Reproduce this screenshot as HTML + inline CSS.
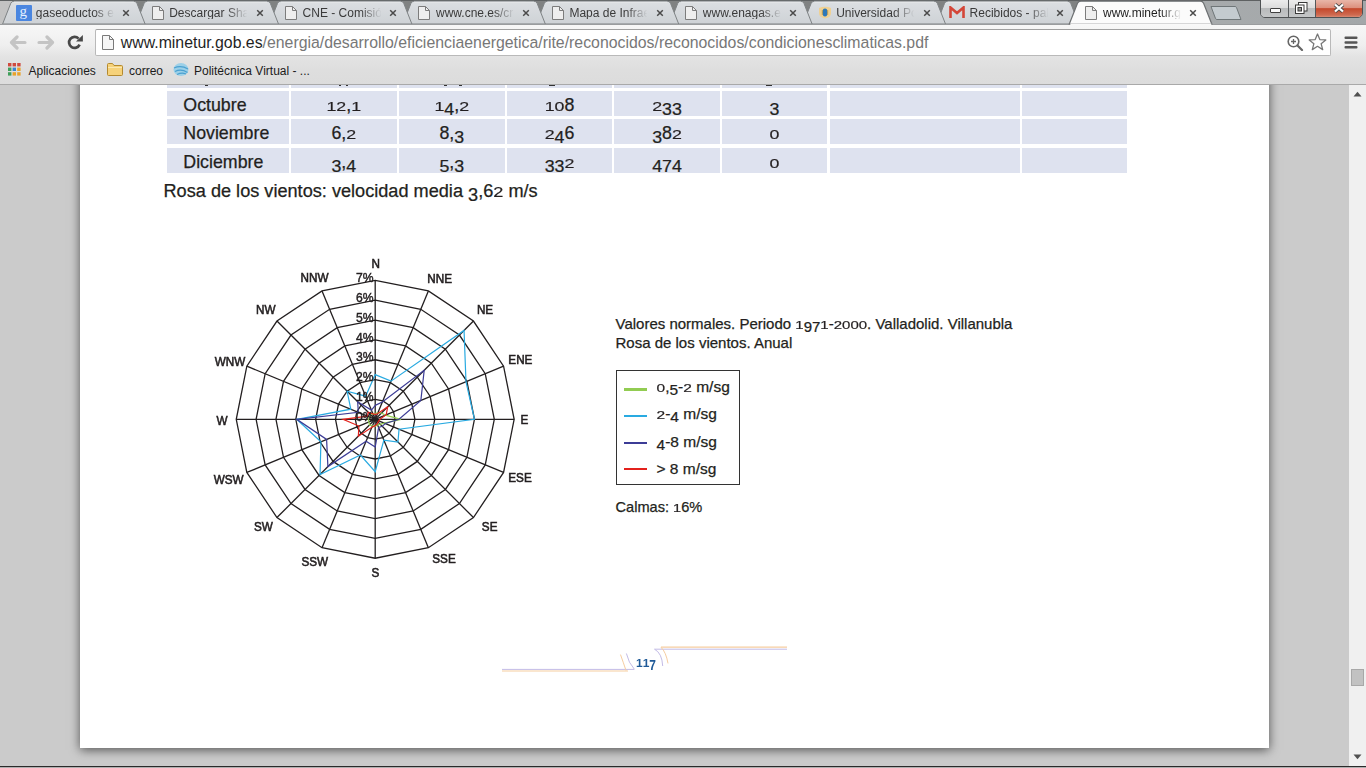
<!DOCTYPE html>
<html><head><meta charset="utf-8"><style>
*{box-sizing:border-box}
html,body{margin:0;padding:0}
body{width:1366px;height:768px;overflow:hidden;position:relative;background:#cbcbcb;font-family:"Liberation Sans",sans-serif;color:#222}
.abs{position:absolute}
.tt{position:absolute;white-space:pre;line-height:1}
</style></head><body>

<div class="abs" style="left:80px;top:60px;width:1189px;height:688px;background:#fff;box-shadow:0 2px 10px rgba(0,0,0,0.6)"></div>
<div class="abs" style="left:167px;top:60px;width:122px;height:28px;background:#dee2ef"></div>
<div class="abs" style="left:291px;top:60px;width:105.5px;height:28px;background:#dee2ef"></div>
<div class="abs" style="left:399px;top:60px;width:105.5px;height:28px;background:#dee2ef"></div>
<div class="abs" style="left:507px;top:60px;width:105px;height:28px;background:#dee2ef"></div>
<div class="abs" style="left:614px;top:60px;width:106px;height:28px;background:#dee2ef"></div>
<div class="abs" style="left:722px;top:60px;width:105px;height:28px;background:#dee2ef"></div>
<div class="abs" style="left:830px;top:60px;width:189.5px;height:28px;background:#dee2ef"></div>
<div class="abs" style="left:1022px;top:60px;width:105px;height:28px;background:#dee2ef"></div>
<div class="abs" style="left:167px;top:91px;width:122px;height:25px;background:#dee2ef"></div>
<div class="abs" style="left:291px;top:91px;width:105.5px;height:25px;background:#dee2ef"></div>
<div class="abs" style="left:399px;top:91px;width:105.5px;height:25px;background:#dee2ef"></div>
<div class="abs" style="left:507px;top:91px;width:105px;height:25px;background:#dee2ef"></div>
<div class="abs" style="left:614px;top:91px;width:106px;height:25px;background:#dee2ef"></div>
<div class="abs" style="left:722px;top:91px;width:105px;height:25px;background:#dee2ef"></div>
<div class="abs" style="left:830px;top:91px;width:189.5px;height:25px;background:#dee2ef"></div>
<div class="abs" style="left:1022px;top:91px;width:105px;height:25px;background:#dee2ef"></div>
<div class="abs" style="left:167px;top:119px;width:122px;height:25px;background:#dee2ef"></div>
<div class="abs" style="left:291px;top:119px;width:105.5px;height:25px;background:#dee2ef"></div>
<div class="abs" style="left:399px;top:119px;width:105.5px;height:25px;background:#dee2ef"></div>
<div class="abs" style="left:507px;top:119px;width:105px;height:25px;background:#dee2ef"></div>
<div class="abs" style="left:614px;top:119px;width:106px;height:25px;background:#dee2ef"></div>
<div class="abs" style="left:722px;top:119px;width:105px;height:25px;background:#dee2ef"></div>
<div class="abs" style="left:830px;top:119px;width:189.5px;height:25px;background:#dee2ef"></div>
<div class="abs" style="left:1022px;top:119px;width:105px;height:25px;background:#dee2ef"></div>
<div class="abs" style="left:167px;top:147.5px;width:122px;height:25.0px;background:#dee2ef"></div>
<div class="abs" style="left:291px;top:147.5px;width:105.5px;height:25.0px;background:#dee2ef"></div>
<div class="abs" style="left:399px;top:147.5px;width:105.5px;height:25.0px;background:#dee2ef"></div>
<div class="abs" style="left:507px;top:147.5px;width:105px;height:25.0px;background:#dee2ef"></div>
<div class="abs" style="left:614px;top:147.5px;width:106px;height:25.0px;background:#dee2ef"></div>
<div class="abs" style="left:722px;top:147.5px;width:105px;height:25.0px;background:#dee2ef"></div>
<div class="abs" style="left:830px;top:147.5px;width:189.5px;height:25.0px;background:#dee2ef"></div>
<div class="abs" style="left:1022px;top:147.5px;width:105px;height:25.0px;background:#dee2ef"></div>
<div class="tt" style="left:183.3px;top:97.1px;font-size:17.8px;color:#231f20;-webkit-text-stroke:0.25px #231f20;">Octubre</div>
<div class="tt" style="left:291px;top:97.1px;width:105.5px;text-align:center;font-size:17.8px;color:#231f20;-webkit-text-stroke:0.25px #231f20;"><span style="display:inline-block;transform:scaleY(0.76);transform-origin:50% 84.65%">1</span><span style="display:inline-block;transform:scaleY(0.76);transform-origin:50% 84.65%">2</span>,<span style="display:inline-block;transform:scaleY(0.76);transform-origin:50% 84.65%">1</span></div>
<div class="tt" style="left:399px;top:97.1px;width:105.5px;text-align:center;font-size:17.8px;color:#231f20;-webkit-text-stroke:0.25px #231f20;"><span style="display:inline-block;transform:scaleY(0.76);transform-origin:50% 84.65%">1</span><span style="display:inline-block;transform:translateY(0.2em) scaleY(0.96);transform-origin:50% 84.65%">4</span>,<span style="display:inline-block;transform:scaleY(0.76);transform-origin:50% 84.65%">2</span></div>
<div class="tt" style="left:507px;top:97.1px;width:105px;text-align:center;font-size:17.8px;color:#231f20;-webkit-text-stroke:0.25px #231f20;"><span style="display:inline-block;transform:scaleY(0.76);transform-origin:50% 84.65%">1</span><span style="display:inline-block;transform:scaleY(0.76);transform-origin:50% 84.65%">0</span>8</div>
<div class="tt" style="left:614px;top:97.1px;width:106px;text-align:center;font-size:17.8px;color:#231f20;-webkit-text-stroke:0.25px #231f20;"><span style="display:inline-block;transform:scaleY(0.76);transform-origin:50% 84.65%">2</span><span style="display:inline-block;transform:translateY(0.2em) scaleY(0.96);transform-origin:50% 84.65%">3</span><span style="display:inline-block;transform:translateY(0.2em) scaleY(0.96);transform-origin:50% 84.65%">3</span></div>
<div class="tt" style="left:722px;top:97.1px;width:105px;text-align:center;font-size:17.8px;color:#231f20;-webkit-text-stroke:0.25px #231f20;"><span style="display:inline-block;transform:translateY(0.2em) scaleY(0.96);transform-origin:50% 84.65%">3</span></div>
<div class="tt" style="left:183.3px;top:125.1px;font-size:17.8px;color:#231f20;-webkit-text-stroke:0.25px #231f20;">Noviembre</div>
<div class="tt" style="left:291px;top:125.1px;width:105.5px;text-align:center;font-size:17.8px;color:#231f20;-webkit-text-stroke:0.25px #231f20;">6,<span style="display:inline-block;transform:scaleY(0.76);transform-origin:50% 84.65%">2</span></div>
<div class="tt" style="left:399px;top:125.1px;width:105.5px;text-align:center;font-size:17.8px;color:#231f20;-webkit-text-stroke:0.25px #231f20;">8,<span style="display:inline-block;transform:translateY(0.2em) scaleY(0.96);transform-origin:50% 84.65%">3</span></div>
<div class="tt" style="left:507px;top:125.1px;width:105px;text-align:center;font-size:17.8px;color:#231f20;-webkit-text-stroke:0.25px #231f20;"><span style="display:inline-block;transform:scaleY(0.76);transform-origin:50% 84.65%">2</span><span style="display:inline-block;transform:translateY(0.2em) scaleY(0.96);transform-origin:50% 84.65%">4</span>6</div>
<div class="tt" style="left:614px;top:125.1px;width:106px;text-align:center;font-size:17.8px;color:#231f20;-webkit-text-stroke:0.25px #231f20;"><span style="display:inline-block;transform:translateY(0.2em) scaleY(0.96);transform-origin:50% 84.65%">3</span>8<span style="display:inline-block;transform:scaleY(0.76);transform-origin:50% 84.65%">2</span></div>
<div class="tt" style="left:722px;top:125.1px;width:105px;text-align:center;font-size:17.8px;color:#231f20;-webkit-text-stroke:0.25px #231f20;"><span style="display:inline-block;transform:scaleY(0.76);transform-origin:50% 84.65%">0</span></div>
<div class="tt" style="left:183.3px;top:153.6px;font-size:17.8px;color:#231f20;-webkit-text-stroke:0.25px #231f20;">Diciembre</div>
<div class="tt" style="left:291px;top:153.6px;width:105.5px;text-align:center;font-size:17.8px;color:#231f20;-webkit-text-stroke:0.25px #231f20;"><span style="display:inline-block;transform:translateY(0.2em) scaleY(0.96);transform-origin:50% 84.65%">3</span>,<span style="display:inline-block;transform:translateY(0.2em) scaleY(0.96);transform-origin:50% 84.65%">4</span></div>
<div class="tt" style="left:399px;top:153.6px;width:105.5px;text-align:center;font-size:17.8px;color:#231f20;-webkit-text-stroke:0.25px #231f20;"><span style="display:inline-block;transform:translateY(0.2em) scaleY(0.96);transform-origin:50% 84.65%">5</span>,<span style="display:inline-block;transform:translateY(0.2em) scaleY(0.96);transform-origin:50% 84.65%">3</span></div>
<div class="tt" style="left:507px;top:153.6px;width:105px;text-align:center;font-size:17.8px;color:#231f20;-webkit-text-stroke:0.25px #231f20;"><span style="display:inline-block;transform:translateY(0.2em) scaleY(0.96);transform-origin:50% 84.65%">3</span><span style="display:inline-block;transform:translateY(0.2em) scaleY(0.96);transform-origin:50% 84.65%">3</span><span style="display:inline-block;transform:scaleY(0.76);transform-origin:50% 84.65%">2</span></div>
<div class="tt" style="left:614px;top:153.6px;width:106px;text-align:center;font-size:17.8px;color:#231f20;-webkit-text-stroke:0.25px #231f20;"><span style="display:inline-block;transform:translateY(0.2em) scaleY(0.96);transform-origin:50% 84.65%">4</span><span style="display:inline-block;transform:translateY(0.2em) scaleY(0.96);transform-origin:50% 84.65%">7</span><span style="display:inline-block;transform:translateY(0.2em) scaleY(0.96);transform-origin:50% 84.65%">4</span></div>
<div class="tt" style="left:722px;top:153.6px;width:105px;text-align:center;font-size:17.8px;color:#231f20;-webkit-text-stroke:0.25px #231f20;"><span style="display:inline-block;transform:scaleY(0.76);transform-origin:50% 84.65%">0</span></div>
<div class="abs" style="left:205px;top:85px;width:2.5px;height:1.2px;background:#333"></div>
<div class="abs" style="left:338.5px;top:85px;width:2.0px;height:1.2px;background:#333"></div>
<div class="abs" style="left:346px;top:85px;width:2px;height:1.2px;background:#333"></div>
<div class="abs" style="left:444px;top:85px;width:2.5px;height:1.2px;background:#333"></div>
<div class="abs" style="left:459px;top:85px;width:2.5px;height:1.2px;background:#333"></div>
<div class="abs" style="left:549px;top:85px;width:6px;height:1.2px;background:#333"></div>
<div class="abs" style="left:766px;top:85px;width:6px;height:1.2px;background:#333"></div>
<div class="tt" style="left:163.5px;top:182.4px;font-size:18.15px;color:#231f20;-webkit-text-stroke:0.25px #231f20;">Rosa de los vientos: velocidad media <span style="display:inline-block;transform:translateY(0.2em) scaleY(0.96);transform-origin:50% 84.65%">3</span>,6<span style="display:inline-block;transform:scaleY(0.76);transform-origin:50% 84.65%">2</span> m/s</div>
<svg class="abs" style="left:0;top:0" width="1366" height="768" viewBox="0 0 1366 768">
<polygon points="375.20,399.45 382.80,400.96 389.24,405.26 393.54,411.70 395.05,419.30 393.54,426.90 389.24,433.34 382.80,437.64 375.20,439.15 367.60,437.64 361.16,433.34 356.86,426.90 355.35,419.30 356.86,411.70 361.16,405.26 367.60,400.96" fill="none" stroke="#231f20" stroke-width="1.3"/>
<polygon points="375.20,379.60 390.39,382.62 403.27,391.23 411.88,404.11 414.90,419.30 411.88,434.49 403.27,447.37 390.39,455.98 375.20,459.00 360.01,455.98 347.13,447.37 338.52,434.49 335.50,419.30 338.52,404.11 347.13,391.23 360.01,382.62" fill="none" stroke="#231f20" stroke-width="1.3"/>
<polygon points="375.20,359.75 397.99,364.28 417.31,377.19 430.22,396.51 434.75,419.30 430.22,442.09 417.31,461.41 397.99,474.32 375.20,478.85 352.41,474.32 333.09,461.41 320.18,442.09 315.65,419.30 320.18,396.51 333.09,377.19 352.41,364.28" fill="none" stroke="#231f20" stroke-width="1.3"/>
<polygon points="375.20,339.90 405.59,345.94 431.34,363.16 448.56,388.91 454.60,419.30 448.56,449.69 431.34,475.44 405.59,492.66 375.20,498.70 344.81,492.66 319.06,475.44 301.84,449.69 295.80,419.30 301.84,388.91 319.06,363.16 344.81,345.94" fill="none" stroke="#231f20" stroke-width="1.3"/>
<polygon points="375.20,320.05 413.18,327.60 445.38,349.12 466.90,381.32 474.45,419.30 466.90,457.28 445.38,489.48 413.18,511.00 375.20,518.55 337.22,511.00 305.02,489.48 283.50,457.28 275.95,419.30 283.50,381.32 305.02,349.12 337.22,327.60" fill="none" stroke="#231f20" stroke-width="1.3"/>
<polygon points="375.20,300.20 420.78,309.27 459.42,335.08 485.23,373.72 494.30,419.30 485.23,464.88 459.42,503.52 420.78,529.33 375.20,538.40 329.62,529.33 290.98,503.52 265.17,464.88 256.10,419.30 265.17,373.72 290.98,335.08 329.62,309.27" fill="none" stroke="#231f20" stroke-width="1.3"/>
<polygon points="375.20,280.35 428.37,290.93 473.45,321.05 503.57,366.13 514.15,419.30 503.57,472.47 473.45,517.55 428.37,547.67 375.20,558.25 322.03,547.67 276.95,517.55 246.83,472.47 236.25,419.30 246.83,366.13 276.95,321.05 322.03,290.93" fill="none" stroke="#231f20" stroke-width="1.3"/>
<line x1="375.2" y1="419.3" x2="375.20" y2="280.35" stroke="#231f20" stroke-width="1.3"/>
<line x1="375.2" y1="419.3" x2="428.37" y2="290.93" stroke="#231f20" stroke-width="1.3"/>
<line x1="375.2" y1="419.3" x2="473.45" y2="321.05" stroke="#231f20" stroke-width="1.3"/>
<line x1="375.2" y1="419.3" x2="503.57" y2="366.13" stroke="#231f20" stroke-width="1.3"/>
<line x1="375.2" y1="419.3" x2="514.15" y2="419.30" stroke="#231f20" stroke-width="1.3"/>
<line x1="375.2" y1="419.3" x2="503.57" y2="472.47" stroke="#231f20" stroke-width="1.3"/>
<line x1="375.2" y1="419.3" x2="473.45" y2="517.55" stroke="#231f20" stroke-width="1.3"/>
<line x1="375.2" y1="419.3" x2="428.37" y2="547.67" stroke="#231f20" stroke-width="1.3"/>
<line x1="375.2" y1="419.3" x2="375.20" y2="558.25" stroke="#231f20" stroke-width="1.3"/>
<line x1="375.2" y1="419.3" x2="322.03" y2="547.67" stroke="#231f20" stroke-width="1.3"/>
<line x1="375.2" y1="419.3" x2="276.95" y2="517.55" stroke="#231f20" stroke-width="1.3"/>
<line x1="375.2" y1="419.3" x2="246.83" y2="472.47" stroke="#231f20" stroke-width="1.3"/>
<line x1="375.2" y1="419.3" x2="236.25" y2="419.30" stroke="#231f20" stroke-width="1.3"/>
<line x1="375.2" y1="419.3" x2="246.83" y2="366.13" stroke="#231f20" stroke-width="1.3"/>
<line x1="375.2" y1="419.3" x2="276.95" y2="321.05" stroke="#231f20" stroke-width="1.3"/>
<line x1="375.2" y1="419.3" x2="322.03" y2="290.93" stroke="#231f20" stroke-width="1.3"/>
<polygon points="375.20,413.35 377.86,412.88 381.52,412.98 385.29,415.12 401.00,419.30 384.37,423.10 380.11,424.21 377.48,424.80 375.20,426.25 372.54,425.72 369.59,424.91 368.78,421.96 368.25,419.30 369.70,417.02 370.99,415.09 372.92,413.80" fill="none" stroke="#92cc52" stroke-width="1.2" stroke-linejoin="miter"/>
<polygon points="375.20,374.64 391.00,381.15 464.05,330.45 465.98,381.70 474.45,419.30 399.04,429.18 397.94,442.04 383.86,440.21 375.20,471.70 360.39,455.06 320.04,474.46 320.92,441.78 296.79,419.30 350.81,409.20 347.13,391.23 365.63,396.19" fill="none" stroke="#29aae1" stroke-width="1.2" stroke-linejoin="miter"/>
<polygon points="375.20,405.41 382.34,402.06 424.19,370.31 420.86,400.39 399.02,419.30 385.29,423.48 382.22,426.32 378.62,427.55 375.20,447.09 366.08,441.31 327.90,466.60 326.60,439.43 296.79,419.30 358.33,412.31 357.65,401.75 371.40,410.13" fill="none" stroke="#3c3c96" stroke-width="1.2" stroke-linejoin="miter"/>
<polygon points="375.20,414.34 377.48,413.80 387.69,406.81 386.20,414.74 379.96,419.30 378.87,420.82 378.01,422.11 377.10,423.88 375.20,425.65 371.93,427.19 358.36,436.14 358.88,426.06 343.04,419.30 367.50,416.11 368.18,412.28 372.92,413.80" fill="none" stroke="#e3211c" stroke-width="1.2" stroke-linejoin="miter"/>
</svg>
<div class="tt" style="left:335.7px;top:256.6px;width:80px;text-align:center;font-size:13px;color:#231f20;-webkit-text-stroke:0.6px #231f20"><span style="display:inline-block;transform:scaleX(0.9)">N</span></div>
<div class="tt" style="left:399.7px;top:271.9px;width:80px;text-align:center;font-size:13px;color:#231f20;-webkit-text-stroke:0.6px #231f20"><span style="display:inline-block;transform:scaleX(0.9)">NNE</span></div>
<div class="tt" style="left:445.4px;top:302.9px;width:80px;text-align:center;font-size:13px;color:#231f20;-webkit-text-stroke:0.6px #231f20"><span style="display:inline-block;transform:scaleX(0.9)">NE</span></div>
<div class="tt" style="left:480.0px;top:352.9px;width:80px;text-align:center;font-size:13px;color:#231f20;-webkit-text-stroke:0.6px #231f20"><span style="display:inline-block;transform:scaleX(0.9)">ENE</span></div>
<div class="tt" style="left:484.6px;top:412.6px;width:80px;text-align:center;font-size:13px;color:#231f20;-webkit-text-stroke:0.6px #231f20"><span style="display:inline-block;transform:scaleX(0.9)">E</span></div>
<div class="tt" style="left:480.2px;top:470.7px;width:80px;text-align:center;font-size:13px;color:#231f20;-webkit-text-stroke:0.6px #231f20"><span style="display:inline-block;transform:scaleX(0.9)">ESE</span></div>
<div class="tt" style="left:449.9px;top:519.7px;width:80px;text-align:center;font-size:13px;color:#231f20;-webkit-text-stroke:0.6px #231f20"><span style="display:inline-block;transform:scaleX(0.9)">SE</span></div>
<div class="tt" style="left:403.7px;top:551.9px;width:80px;text-align:center;font-size:13px;color:#231f20;-webkit-text-stroke:0.6px #231f20"><span style="display:inline-block;transform:scaleX(0.9)">SSE</span></div>
<div class="tt" style="left:335.2px;top:565.7px;width:80px;text-align:center;font-size:13px;color:#231f20;-webkit-text-stroke:0.6px #231f20"><span style="display:inline-block;transform:scaleX(0.9)">S</span></div>
<div class="tt" style="left:274.4px;top:554.9px;width:80px;text-align:center;font-size:13px;color:#231f20;-webkit-text-stroke:0.6px #231f20"><span style="display:inline-block;transform:scaleX(0.9)">SSW</span></div>
<div class="tt" style="left:223.4px;top:519.7px;width:80px;text-align:center;font-size:13px;color:#231f20;-webkit-text-stroke:0.6px #231f20"><span style="display:inline-block;transform:scaleX(0.9)">SW</span></div>
<div class="tt" style="left:189.1px;top:472.8px;width:80px;text-align:center;font-size:13px;color:#231f20;-webkit-text-stroke:0.6px #231f20"><span style="display:inline-block;transform:scaleX(0.9)">WSW</span></div>
<div class="tt" style="left:182.4px;top:413.6px;width:80px;text-align:center;font-size:13px;color:#231f20;-webkit-text-stroke:0.6px #231f20"><span style="display:inline-block;transform:scaleX(0.9)">W</span></div>
<div class="tt" style="left:189.7px;top:355.0px;width:80px;text-align:center;font-size:13px;color:#231f20;-webkit-text-stroke:0.6px #231f20"><span style="display:inline-block;transform:scaleX(0.9)">WNW</span></div>
<div class="tt" style="left:226.3px;top:302.9px;width:80px;text-align:center;font-size:13px;color:#231f20;-webkit-text-stroke:0.6px #231f20"><span style="display:inline-block;transform:scaleX(0.9)">NW</span></div>
<div class="tt" style="left:274.9px;top:270.9px;width:80px;text-align:center;font-size:13px;color:#231f20;-webkit-text-stroke:0.6px #231f20"><span style="display:inline-block;transform:scaleX(0.9)">NNW</span></div>
<div class="tt" style="left:313.3px;top:409.9px;width:60px;text-align:right;font-size:13.5px;color:#231f20;-webkit-text-stroke:0.45px #231f20"><span style="display:inline-block;transform:scaleX(0.9);transform-origin:100% 50%">0%</span></div>
<div class="tt" style="left:313.3px;top:390.0px;width:60px;text-align:right;font-size:13.5px;color:#231f20;-webkit-text-stroke:0.45px #231f20"><span style="display:inline-block;transform:scaleX(0.9);transform-origin:100% 50%">1%</span></div>
<div class="tt" style="left:313.3px;top:370.2px;width:60px;text-align:right;font-size:13.5px;color:#231f20;-webkit-text-stroke:0.45px #231f20"><span style="display:inline-block;transform:scaleX(0.9);transform-origin:100% 50%">2%</span></div>
<div class="tt" style="left:313.3px;top:350.3px;width:60px;text-align:right;font-size:13.5px;color:#231f20;-webkit-text-stroke:0.45px #231f20"><span style="display:inline-block;transform:scaleX(0.9);transform-origin:100% 50%">3%</span></div>
<div class="tt" style="left:313.3px;top:330.5px;width:60px;text-align:right;font-size:13.5px;color:#231f20;-webkit-text-stroke:0.45px #231f20"><span style="display:inline-block;transform:scaleX(0.9);transform-origin:100% 50%">4%</span></div>
<div class="tt" style="left:313.3px;top:310.6px;width:60px;text-align:right;font-size:13.5px;color:#231f20;-webkit-text-stroke:0.45px #231f20"><span style="display:inline-block;transform:scaleX(0.9);transform-origin:100% 50%">5%</span></div>
<div class="tt" style="left:313.3px;top:290.8px;width:60px;text-align:right;font-size:13.5px;color:#231f20;-webkit-text-stroke:0.45px #231f20"><span style="display:inline-block;transform:scaleX(0.9);transform-origin:100% 50%">6%</span></div>
<div class="tt" style="left:313.3px;top:270.9px;width:60px;text-align:right;font-size:13.5px;color:#231f20;-webkit-text-stroke:0.45px #231f20"><span style="display:inline-block;transform:scaleX(0.9);transform-origin:100% 50%">7%</span></div>
<div class="tt" style="left:615.5px;top:315.6px;font-size:15px;color:#231f20;-webkit-text-stroke:0.25px #231f20;">Valores normales. Periodo <span style="display:inline-block;transform:scaleY(0.76);transform-origin:50% 84.65%">1</span><span style="display:inline-block;transform:translateY(0.2em) scaleY(0.96);transform-origin:50% 84.65%">9</span><span style="display:inline-block;transform:translateY(0.2em) scaleY(0.96);transform-origin:50% 84.65%">7</span><span style="display:inline-block;transform:scaleY(0.76);transform-origin:50% 84.65%">1</span>-<span style="display:inline-block;transform:scaleY(0.76);transform-origin:50% 84.65%">2</span><span style="display:inline-block;transform:scaleY(0.76);transform-origin:50% 84.65%">0</span><span style="display:inline-block;transform:scaleY(0.76);transform-origin:50% 84.65%">0</span><span style="display:inline-block;transform:scaleY(0.76);transform-origin:50% 84.65%">0</span>. Valladolid. Villanubla</div>
<div class="tt" style="left:615.5px;top:334.6px;font-size:15px;color:#231f20;-webkit-text-stroke:0.25px #231f20;">Rosa de los vientos. Anual</div>
<div class="abs" style="left:615.7px;top:369.9px;width:124.5px;height:114.7px;border:1.4px solid #333"></div>
<div class="abs" style="left:624.3px;top:388.2px;width:22.3px;height:2.4px;background:#92cc52"></div>
<div class="tt" style="left:656.5px;top:378.5px;font-size:15.5px;color:#231f20;-webkit-text-stroke:0.25px #231f20;"><span style="display:inline-block;transform:scaleY(0.76);transform-origin:50% 84.65%">0</span>,<span style="display:inline-block;transform:translateY(0.2em) scaleY(0.96);transform-origin:50% 84.65%">5</span>-<span style="display:inline-block;transform:scaleY(0.76);transform-origin:50% 84.65%">2</span> m/sg</div>
<div class="abs" style="left:624.3px;top:414.8px;width:22.3px;height:2.4px;background:#29aae1"></div>
<div class="tt" style="left:656.5px;top:405.6px;font-size:15.5px;color:#231f20;-webkit-text-stroke:0.25px #231f20;"><span style="display:inline-block;transform:scaleY(0.76);transform-origin:50% 84.65%">2</span>-<span style="display:inline-block;transform:translateY(0.2em) scaleY(0.96);transform-origin:50% 84.65%">4</span> m/sg</div>
<div class="abs" style="left:624.3px;top:441.6px;width:22.3px;height:2.4px;background:#3c3c96"></div>
<div class="tt" style="left:656.5px;top:433.8px;font-size:15.5px;color:#231f20;-webkit-text-stroke:0.25px #231f20;"><span style="display:inline-block;transform:translateY(0.2em) scaleY(0.96);transform-origin:50% 84.65%">4</span>-8 m/sg</div>
<div class="abs" style="left:624.3px;top:467.5px;width:22.3px;height:2.4px;background:#e3211c"></div>
<div class="tt" style="left:656.5px;top:461.3px;font-size:15.5px;color:#231f20;-webkit-text-stroke:0.25px #231f20;">&gt; 8 m/sg</div>
<div class="tt" style="left:615.5px;top:500.2px;font-size:14.6px;color:#231f20;-webkit-text-stroke:0.25px #231f20;">Calmas: <span style="display:inline-block;transform:scaleY(0.76);transform-origin:50% 84.65%">1</span>6%</div>
<svg class="abs" style="left:0;top:0" width="1366" height="768" viewBox="0 0 1366 768">
<line x1="502" y1="671" x2="628" y2="671" stroke="#f6cda0" stroke-width="1.05"/>
<line x1="502" y1="669.4" x2="634" y2="669.4" stroke="#c3bbe6" stroke-width="1"/>
<path d="M620.5,654.6 Q623.5,663 626,670.5" fill="none" stroke="#f6cda0" stroke-width="1"/>
<path d="M626.4,653.5 Q628.5,663 634.5,669.4" fill="none" stroke="#c3bbe6" stroke-width="1"/>
<line x1="661" y1="647.1" x2="787" y2="647.1" stroke="#f6cda0" stroke-width="1.05"/>
<line x1="654.5" y1="649.2" x2="787" y2="649.2" stroke="#c3bbe6" stroke-width="1"/>
<path d="M654.5,649.2 Q662,653 662.7,666" fill="none" stroke="#c3bbe6" stroke-width="1"/>
<path d="M661,647.3 Q666,652 668,663.4" fill="none" stroke="#f6cda0" stroke-width="1"/>
</svg>
<div class="tt" style="left:635.5px;top:654.2px;font-size:15px;font-weight:bold;color:#1f5a98;transform:scaleX(0.8);transform-origin:0 0"><span style="display:inline-block;transform:scaleY(0.76);transform-origin:50% 84.65%">1</span><span style="display:inline-block;transform:scaleY(0.76);transform-origin:50% 84.65%">1</span><span style="display:inline-block;transform:translateY(0.2em) scaleY(0.96);transform-origin:50% 84.65%">7</span></div>
<div class="abs" style="left:1349px;top:85px;width:17px;height:683px;background:#f0f0f0"></div>
<svg class="abs" style="left:1353px;top:91px" width="9" height="6" viewBox="0 0 9 6"><path d="M0.5,5.5 L4.5,0.8 L8.5,5.5 Z" fill="#505050"/></svg>
<svg class="abs" style="left:1353px;top:754px" width="9" height="6" viewBox="0 0 9 6"><path d="M0.5,0.5 L4.5,5.2 L8.5,0.5 Z" fill="#505050"/></svg>
<div class="abs" style="left:1351px;top:669px;width:13px;height:16.5px;background:#c2c2c2;border:1px solid #a8a8a8"></div>
<div class="abs" style="left:0;top:765.5px;width:1366px;height:1.5px;background:#2a2a2a"></div>
<div class="abs" style="left:0;top:767px;width:1366px;height:1px;background:#b0b0b0"></div>
<svg class="abs" style="left:0;top:0" width="1366" height="25" viewBox="0 0 1366 25">
<defs>
<linearGradient id="frame" x1="0" y1="0" x2="1" y2="0">
<stop offset="0" stop-color="#c3c3c3"/><stop offset="0.5" stop-color="#b4b6b7"/><stop offset="1" stop-color="#a3a7a9"/></linearGradient>
<linearGradient id="tabg" x1="0" y1="0" x2="0" y2="1">
<stop offset="0" stop-color="#dcdfe2"/><stop offset="1" stop-color="#ced2d6"/></linearGradient>
<linearGradient id="fadeg" x1="0" y1="0" x2="1" y2="0">
<stop offset="0" stop-color="#d4d7db" stop-opacity="0"/><stop offset="1" stop-color="#d4d7db" stop-opacity="1"/></linearGradient>
<linearGradient id="fadea" x1="0" y1="0" x2="1" y2="0">
<stop offset="0" stop-color="#fbfbfb" stop-opacity="0"/><stop offset="1" stop-color="#fbfbfb" stop-opacity="1"/></linearGradient>
</defs>
<rect x="0" y="0" width="1366" height="25" fill="url(#frame)"/>
<path d="M125.0,0.5 L147.0,0.5 L136.0,24 Z" fill="#808282"/>
<path d="M258.4,0.5 L280.4,0.5 L269.4,24 Z" fill="#808282"/>
<path d="M391.8,0.5 L413.8,0.5 L402.8,24 Z" fill="#808282"/>
<path d="M525.2,0.5 L547.2,0.5 L536.2,24 Z" fill="#808282"/>
<path d="M658.6,0.5 L680.6,0.5 L669.6,24 Z" fill="#808282"/>
<path d="M792.0,0.5 L814.0,0.5 L803.0,24 Z" fill="#808282"/>
<path d="M925.4,0.5 L947.4,0.5 L936.4,24 Z" fill="#808282"/>
<path d="M1058.8,0.5 L1080.8,0.5 L1069.8,24 Z" fill="#808282"/>
<rect x="0" y="0" width="1366" height="1" fill="#5e6162"/>
<path d="M936.4,24 L944.6,3.2 Q945.6,1.2 947.9,1.2 L1067.4,1.2 Q1069.7,1.2 1070.7,3.2 L1078.9,24 Z" fill="url(#tabg)" stroke="#7f8385" stroke-width="1"/>
<path d="M947.9,2.2 L1067.4,2.2" stroke="#e6e8ea" stroke-width="1"/>
<path d="M803.0,24 L811.2,3.2 Q812.2,1.2 814.5,1.2 L934.0,1.2 Q936.3,1.2 937.3,3.2 L945.5,24 Z" fill="url(#tabg)" stroke="#7f8385" stroke-width="1"/>
<path d="M814.5,2.2 L934.0,2.2" stroke="#e6e8ea" stroke-width="1"/>
<path d="M669.6,24 L677.8,3.2 Q678.8,1.2 681.1,1.2 L800.6,1.2 Q802.9,1.2 803.9,3.2 L812.1,24 Z" fill="url(#tabg)" stroke="#7f8385" stroke-width="1"/>
<path d="M681.1,2.2 L800.6,2.2" stroke="#e6e8ea" stroke-width="1"/>
<path d="M536.2,24 L544.4,3.2 Q545.4,1.2 547.7,1.2 L667.2,1.2 Q669.5,1.2 670.5,3.2 L678.7,24 Z" fill="url(#tabg)" stroke="#7f8385" stroke-width="1"/>
<path d="M547.7,2.2 L667.2,2.2" stroke="#e6e8ea" stroke-width="1"/>
<path d="M402.8,24 L411.0,3.2 Q412.0,1.2 414.3,1.2 L533.8,1.2 Q536.1,1.2 537.1,3.2 L545.3,24 Z" fill="url(#tabg)" stroke="#7f8385" stroke-width="1"/>
<path d="M414.3,2.2 L533.8,2.2" stroke="#e6e8ea" stroke-width="1"/>
<path d="M269.4,24 L277.6,3.2 Q278.6,1.2 280.9,1.2 L400.4,1.2 Q402.7,1.2 403.7,3.2 L411.9,24 Z" fill="url(#tabg)" stroke="#7f8385" stroke-width="1"/>
<path d="M280.9,2.2 L400.4,2.2" stroke="#e6e8ea" stroke-width="1"/>
<path d="M136.0,24 L144.2,3.2 Q145.2,1.2 147.5,1.2 L267.0,1.2 Q269.3,1.2 270.3,3.2 L278.5,24 Z" fill="url(#tabg)" stroke="#7f8385" stroke-width="1"/>
<path d="M147.5,2.2 L267.0,2.2" stroke="#e6e8ea" stroke-width="1"/>
<path d="M2.6,24 L10.8,3.2 Q11.8,1.2 14.1,1.2 L133.6,1.2 Q135.9,1.2 136.9,3.2 L145.1,24 Z" fill="url(#tabg)" stroke="#7f8385" stroke-width="1"/>
<path d="M14.1,2.2 L133.6,2.2" stroke="#e6e8ea" stroke-width="1"/>
<rect x="0" y="24" width="1366" height="1" fill="#9a9c9e"/>
<path d="M1069.3,24 L1077.5,3.2 Q1078.5,1.2 1080.8,1.2 L1200.3,1.2 Q1202.6,1.2 1203.6,3.2 L1211.8,24 Z" fill="#fbfbfb" stroke="#6e7173" stroke-width="1.2"/>
<rect x="1070.3" y="23.5" width="141" height="2" fill="#f8f8f8"/>
<path d="M1211,6.5 L1235,6.5 Q1236,6.5 1236.5,7.5 L1241,19.5 L1217,19.5 Q1216,19.5 1215.5,18.5 Z" fill="#c4cbcf" stroke="#6f7678" stroke-width="1"/>
</svg>
<div class="tt" style="left:35.8px;top:7.1px;font-size:12px;color:#3a3a3a;width:80px;overflow:hidden;-webkit-mask-image:linear-gradient(90deg,#000 72%,transparent 98%)">gaseoductos e</div>
<svg class="abs" style="left:122.2px;top:9px" width="8" height="8" viewBox="0 0 8 8"><path d="M1.2,1.2 L6.8,6.8 M6.8,1.2 L1.2,6.8" stroke="#4a4a4a" stroke-width="1.5"/></svg>
<div class="abs" style="left:15.6px;top:5px;width:16px;height:16px;background:#4a86e0;border-radius:1px"></div>
<div class="tt" style="left:19.6px;top:3.5px;font-size:15px;color:#e6f0ff;font-family:'Liberation Serif',serif">g</div>
<div class="tt" style="left:169.2px;top:7.1px;font-size:12px;color:#3a3a3a;width:80px;overflow:hidden;-webkit-mask-image:linear-gradient(90deg,#000 72%,transparent 98%)">Descargar Shap</div>
<svg class="abs" style="left:255.6px;top:9px" width="8" height="8" viewBox="0 0 8 8"><path d="M1.2,1.2 L6.8,6.8 M6.8,1.2 L1.2,6.8" stroke="#4a4a4a" stroke-width="1.5"/></svg>
<svg class="abs" style="left:151.6px;top:6px" width="12" height="14" viewBox="0 0 12 14"><path d="M0.5,0.5 L7.5,0.5 L11.5,4.5 L11.5,13.5 L0.5,13.5 Z" fill="#eeeeee" stroke="#7c7c7c" stroke-width="1"/><path d="M7.5,0.5 L7.5,4.5 L11.5,4.5" fill="none" stroke="#7c7c7c" stroke-width="1"/></svg>
<div class="tt" style="left:302.6px;top:7.1px;font-size:12px;color:#3a3a3a;width:80px;overflow:hidden;-webkit-mask-image:linear-gradient(90deg,#000 72%,transparent 98%)">CNE - Comisió</div>
<svg class="abs" style="left:389.0px;top:9px" width="8" height="8" viewBox="0 0 8 8"><path d="M1.2,1.2 L6.8,6.8 M6.8,1.2 L1.2,6.8" stroke="#4a4a4a" stroke-width="1.5"/></svg>
<svg class="abs" style="left:285.0px;top:6px" width="12" height="14" viewBox="0 0 12 14"><path d="M0.5,0.5 L7.5,0.5 L11.5,4.5 L11.5,13.5 L0.5,13.5 Z" fill="#eeeeee" stroke="#7c7c7c" stroke-width="1"/><path d="M7.5,0.5 L7.5,4.5 L11.5,4.5" fill="none" stroke="#7c7c7c" stroke-width="1"/></svg>
<div class="tt" style="left:436.0px;top:7.1px;font-size:12px;color:#3a3a3a;width:80px;overflow:hidden;-webkit-mask-image:linear-gradient(90deg,#000 72%,transparent 98%)">www.cne.es/cr</div>
<svg class="abs" style="left:522.4px;top:9px" width="8" height="8" viewBox="0 0 8 8"><path d="M1.2,1.2 L6.8,6.8 M6.8,1.2 L1.2,6.8" stroke="#4a4a4a" stroke-width="1.5"/></svg>
<svg class="abs" style="left:418.4px;top:6px" width="12" height="14" viewBox="0 0 12 14"><path d="M0.5,0.5 L7.5,0.5 L11.5,4.5 L11.5,13.5 L0.5,13.5 Z" fill="#eeeeee" stroke="#7c7c7c" stroke-width="1"/><path d="M7.5,0.5 L7.5,4.5 L11.5,4.5" fill="none" stroke="#7c7c7c" stroke-width="1"/></svg>
<div class="tt" style="left:569.4px;top:7.1px;font-size:12px;color:#3a3a3a;width:80px;overflow:hidden;-webkit-mask-image:linear-gradient(90deg,#000 72%,transparent 98%)">Mapa de Infrae</div>
<svg class="abs" style="left:655.8px;top:9px" width="8" height="8" viewBox="0 0 8 8"><path d="M1.2,1.2 L6.8,6.8 M6.8,1.2 L1.2,6.8" stroke="#4a4a4a" stroke-width="1.5"/></svg>
<svg class="abs" style="left:551.8px;top:6px" width="12" height="14" viewBox="0 0 12 14"><path d="M0.5,0.5 L7.5,0.5 L11.5,4.5 L11.5,13.5 L0.5,13.5 Z" fill="#eeeeee" stroke="#7c7c7c" stroke-width="1"/><path d="M7.5,0.5 L7.5,4.5 L11.5,4.5" fill="none" stroke="#7c7c7c" stroke-width="1"/></svg>
<div class="tt" style="left:702.8px;top:7.1px;font-size:12px;color:#3a3a3a;width:80px;overflow:hidden;-webkit-mask-image:linear-gradient(90deg,#000 72%,transparent 98%)">www.enagas.e</div>
<svg class="abs" style="left:789.2px;top:9px" width="8" height="8" viewBox="0 0 8 8"><path d="M1.2,1.2 L6.8,6.8 M6.8,1.2 L1.2,6.8" stroke="#4a4a4a" stroke-width="1.5"/></svg>
<svg class="abs" style="left:685.2px;top:6px" width="12" height="14" viewBox="0 0 12 14"><path d="M0.5,0.5 L7.5,0.5 L11.5,4.5 L11.5,13.5 L0.5,13.5 Z" fill="#eeeeee" stroke="#7c7c7c" stroke-width="1"/><path d="M7.5,0.5 L7.5,4.5 L11.5,4.5" fill="none" stroke="#7c7c7c" stroke-width="1"/></svg>
<div class="tt" style="left:836.2px;top:7.1px;font-size:12px;color:#3a3a3a;width:80px;overflow:hidden;-webkit-mask-image:linear-gradient(90deg,#000 72%,transparent 98%)">Universidad Po</div>
<svg class="abs" style="left:922.6px;top:9px" width="8" height="8" viewBox="0 0 8 8"><path d="M1.2,1.2 L6.8,6.8 M6.8,1.2 L1.2,6.8" stroke="#4a4a4a" stroke-width="1.5"/></svg>
<svg class="abs" style="left:817.5px;top:5.5px" width="14" height="13" viewBox="0 0 14 13"><path d="M1,2 Q7,-0.5 13,2 L13,7 Q13,11.5 7,12.5 Q1,11.5 1,7 Z" fill="#f3cf8a" opacity="0.9"/><ellipse cx="7" cy="6.5" rx="2.6" ry="4" fill="#2f78b8"/><path d="M4.3,4 L4.3,9 M9.7,4 L9.7,9" stroke="#c89a40" stroke-width="0.8"/></svg>
<div class="tt" style="left:969.6px;top:7.1px;font-size:12px;color:#3a3a3a;width:80px;overflow:hidden;-webkit-mask-image:linear-gradient(90deg,#000 72%,transparent 98%)">Recibidos - pal</div>
<svg class="abs" style="left:1056.0px;top:9px" width="8" height="8" viewBox="0 0 8 8"><path d="M1.2,1.2 L6.8,6.8 M6.8,1.2 L1.2,6.8" stroke="#4a4a4a" stroke-width="1.5"/></svg>
<svg class="abs" style="left:949.4px;top:6px" width="16" height="13" viewBox="0 0 16 13"><path d="M1.5,12 L1.5,1.5 L8,7 L14.5,1.5 L14.5,12" fill="none" stroke="#d44638" stroke-width="2.6" stroke-linejoin="miter"/></svg>
<div class="tt" style="left:1103.0px;top:7.1px;font-size:12px;color:#1e1e1e;width:80px;overflow:hidden;-webkit-mask-image:linear-gradient(90deg,#000 72%,transparent 98%)">www.minetur.g</div>
<svg class="abs" style="left:1189.4px;top:9px" width="8" height="8" viewBox="0 0 8 8"><path d="M1.2,1.2 L6.8,6.8 M6.8,1.2 L1.2,6.8" stroke="#4a4a4a" stroke-width="1.5"/></svg>
<svg class="abs" style="left:1085.4px;top:6px" width="12" height="14" viewBox="0 0 12 14"><path d="M0.5,0.5 L7.5,0.5 L11.5,4.5 L11.5,13.5 L0.5,13.5 Z" fill="#eeeeee" stroke="#7c7c7c" stroke-width="1"/><path d="M7.5,0.5 L7.5,4.5 L11.5,4.5" fill="none" stroke="#7c7c7c" stroke-width="1"/></svg>
<div class="abs" style="left:1260px;top:-3px;width:103px;height:21px;border:1px solid #4f5254;border-radius:0 0 5px 5px;overflow:hidden;background:#c0c2c3">
<div class="abs" style="left:0;top:0;width:28px;height:20px;background:linear-gradient(#f0f0f0,#dcdcdc 50%,#b9bbbc 52%,#c6c8c9 100%);border-right:1px solid #55585a"></div>
<div class="abs" style="left:28px;top:0;width:27px;height:20px;background:linear-gradient(#f0f0f0,#dcdcdc 50%,#b9bbbc 52%,#c6c8c9 100%);border-right:1px solid #55585a"></div>
<div class="abs" style="left:55px;top:0;width:47px;height:20px;background:linear-gradient(#ecc0b3,#dc8f7c 50%,#c4482c 53%,#cf6a50 85%,#e09a85 100%)"></div>
</div>
<div class="abs" style="left:1269.5px;top:8px;width:11px;height:4.5px;background:#fafafa;border:1px solid #404040;border-radius:1px"></div>
<svg class="abs" style="left:1295px;top:2px" width="13" height="12" viewBox="0 0 13 12"><rect x="3.5" y="0.5" width="8.5" height="8.5" fill="#fff" stroke="#3a3a3a" stroke-width="1"/><rect x="0.5" y="3" width="8.5" height="8.5" fill="#fff" stroke="#3a3a3a" stroke-width="1"/><rect x="3" y="5.5" width="3.5" height="3.5" fill="#999" stroke="#3a3a3a" stroke-width="1"/></svg>
<svg class="abs" style="left:1333px;top:3px" width="12" height="10" viewBox="0 0 12 10"><path d="M2,1.5 L10,8.5 M10,1.5 L2,8.5" stroke="#4a4a4a" stroke-width="3.8"/><path d="M2,1.5 L10,8.5 M10,1.5 L2,8.5" stroke="#fff" stroke-width="2.3"/></svg>

<div class="abs" style="left:0;top:25px;width:1366px;height:59px;background:linear-gradient(#f7f7f7 0px,#efefef 20px,#e3e3e3 32px,#dedede 45px,#dcdcdc 59px)"></div>
<div class="abs" style="left:0;top:84px;width:1366px;height:1px;background:#a9a9a9"></div>
<div class="abs" style="left:95px;top:29px;width:1236px;height:27px;background:#fff;border:1px solid #b9b9b9;border-top-color:#a0a0a0;border-radius:2px"></div>
<svg class="abs" style="left:9px;top:35px" width="18" height="15" viewBox="0 0 18 15"><path d="M16,7.5 L3,7.5 M8,2 L2.5,7.5 L8,13" fill="none" stroke="#c4c4c4" stroke-width="3.2" stroke-linecap="round" stroke-linejoin="round"/></svg>
<svg class="abs" style="left:37px;top:35px" width="18" height="15" viewBox="0 0 18 15"><path d="M2,7.5 L15,7.5 M10,2 L15.5,7.5 L10,13" fill="none" stroke="#c4c4c4" stroke-width="3.2" stroke-linecap="round" stroke-linejoin="round"/></svg>
<svg class="abs" style="left:66px;top:34px" width="18" height="17" viewBox="0 0 18 17"><path d="M12.6,4.6 A5.5,5.5 0 1 0 13.6,10.6" fill="none" stroke="#484848" stroke-width="2.7"/><path d="M10,7.4 L16.9,0.9 L16.9,7.4 Z" fill="#484848"/></svg>
<svg class="abs" style="left:102px;top:35px" width="12" height="15" viewBox="0 0 12 15"><path d="M0.5,0.5 L7.5,0.5 L11.5,4.5 L11.5,14.5 L0.5,14.5 Z" fill="#f6f6f6" stroke="#7a7a7a" stroke-width="1"/><path d="M7.5,0.5 L7.5,4.5 L11.5,4.5" fill="none" stroke="#7a7a7a" stroke-width="1"/></svg>

<div class="tt" style="left:120.8px;top:34.8px;font-size:15.85px;color:#777"><span style="color:#1f1f1f">www.minetur.gob.es</span>/energia/desarrollo/eficienciaenergetica/rite/reconocidos/reconocidos/condicionesclimaticas.pdf</div>
<svg class="abs" style="left:1287px;top:35px" width="17" height="16" viewBox="0 0 17 16"><circle cx="6.5" cy="6.5" r="5.3" fill="none" stroke="#666" stroke-width="1.6"/><path d="M10.5,10.5 L15,15" stroke="#666" stroke-width="2.2" stroke-linecap="round"/><path d="M6.5,4 L6.5,9 M4,6.5 L9,6.5" stroke="#666" stroke-width="1.3"/></svg>
<svg class="abs" style="left:1308px;top:33px" width="19" height="18" viewBox="0 0 19 18"><path d="M9.5,1 L11.8,6.6 L17.8,6.9 L13.1,10.7 L14.7,16.6 L9.5,13.3 L4.3,16.6 L5.9,10.7 L1.2,6.9 L7.2,6.6 Z" fill="#fff" stroke="#777" stroke-width="1.3" stroke-linejoin="round"/></svg>
<svg class="abs" style="left:1344px;top:36px" width="14" height="13" viewBox="0 0 14 13"><rect x="0.5" y="0.5" width="13" height="2.6" rx="1" fill="#555"/><rect x="0.5" y="5.2" width="13" height="2.6" rx="1" fill="#555"/><rect x="0.5" y="9.9" width="13" height="2.6" rx="1" fill="#555"/></svg>

<svg class="abs" style="left:8px;top:63px" width="14" height="14" viewBox="0 0 14 14"><rect x="0.0" y="0.0" width="3.4" height="3.4" fill="#d04a3e"/><rect x="4.6" y="0.0" width="3.4" height="3.4" fill="#d04a3e"/><rect x="9.2" y="0.0" width="3.4" height="3.4" fill="#d04a3e"/><rect x="0.0" y="4.6" width="3.4" height="3.4" fill="#3f9f5a"/><rect x="4.6" y="4.6" width="3.4" height="3.4" fill="#3a85d0"/><rect x="9.2" y="4.6" width="3.4" height="3.4" fill="#e8a22a"/><rect x="0.0" y="9.2" width="3.4" height="3.4" fill="#3f9f5a"/><rect x="4.6" y="9.2" width="3.4" height="3.4" fill="#e8a22a"/><rect x="9.2" y="9.2" width="3.4" height="3.4" fill="#e8a22a"/></svg>
<div class="tt" style="left:28.5px;top:64.6px;font-size:12px;color:#1b1b1b">Aplicaciones</div>
<svg class="abs" style="left:107px;top:63px" width="16" height="13" viewBox="0 0 16 13"><path d="M0.5,1.5 Q0.5,0.5 1.5,0.5 L5.5,0.5 L7,2.5 L14.5,2.5 Q15.5,2.5 15.5,3.5 L15.5,11.5 Q15.5,12.5 14.5,12.5 L1.5,12.5 Q0.5,12.5 0.5,11.5 Z" fill="#f6d27a" stroke="#b48a30" stroke-width="1"/><path d="M1,4.5 L15,4.5" stroke="#fbe8b0" stroke-width="1"/></svg>
<div class="tt" style="left:129px;top:64.6px;font-size:12px;color:#1b1b1b">correo</div>
<svg class="abs" style="left:173px;top:62px" width="16" height="15" viewBox="0 0 16 15"><ellipse cx="8" cy="7.5" rx="7.5" ry="6.5" fill="#9cd0e8"/><path d="M1,6 Q8,3 15,7 M2,9.5 Q8,6.5 14.5,10.5 M4,12.5 Q9,10 13,12" stroke="#4aa0d0" stroke-width="1.2" fill="none"/></svg>
<div class="tt" style="left:194px;top:64.6px;font-size:12px;color:#1b1b1b">Politécnica Virtual - ...</div>
</body></html>
